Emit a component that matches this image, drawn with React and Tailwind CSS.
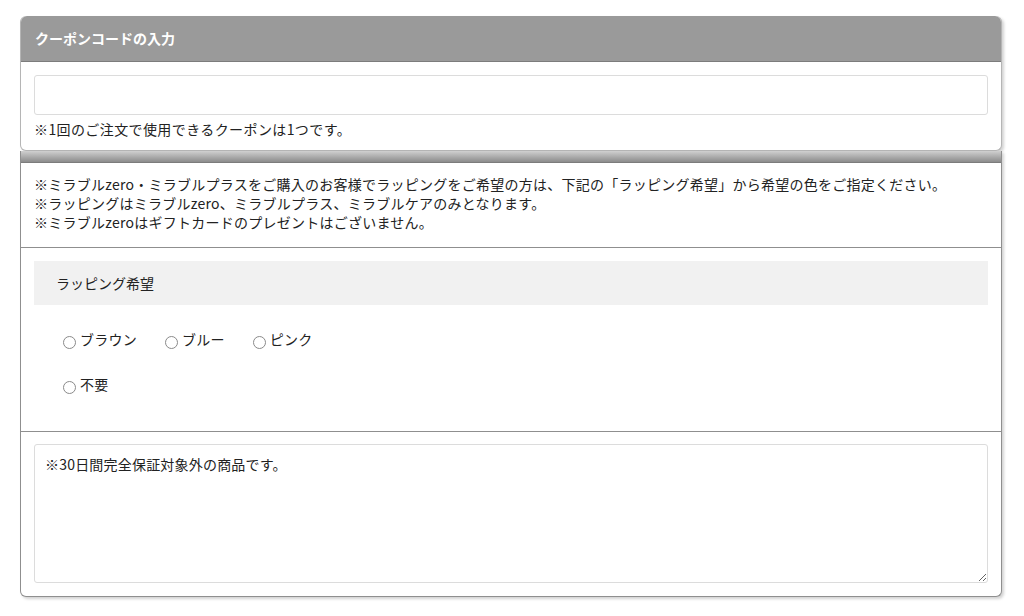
import React from "react";

const font = { fontFamily: '"Noto Sans CJK JP", "Noto Sans", sans-serif' };

function Radio({ label }) {
  return (
    <label className="flex items-center text-[14px] text-[#222] tracking-[0.25px]">
      <span className="mt-[5px] w-[13px] h-[13px] rounded-full border border-[#8a8a8a] bg-white" />
      <span className="ml-[4px]">{label}</span>
    </label>
  );
}

export default function App() {
  return (
    <div className="w-[1024px] h-[616px] bg-white px-[20px] pt-[16px]" style={font}>
      <div className="w-[982px] rounded-md border-x border-b border-[#b5b5b5] shadow-[2px_2px_3px_rgba(0,0,0,0.18)] bg-white">
        <div className="h-[46px] rounded-t-md bg-[#9a9a9a] border-b border-[#7c7c7c] flex items-center px-[14px] text-white text-[14px] font-bold">
          クーポンコードの入力
        </div>
        <div className="px-[13px] pt-[13px] pb-[11px]">
          <input className="block w-full h-[40px] border border-[#dcdcdc] rounded-[3px] outline-none" />
          <p className="mt-[4px] text-[14px] text-[#222] leading-[20px] tracking-[0.4px]">※1回のご注文で使用できるクーポンは1つです。</p>
        </div>
      </div>

      <div className="w-[982px] rounded-b-md border-x border-b border-[#8f8f8f] shadow-[2px_2px_3px_rgba(0,0,0,0.18)] bg-white">
        <div className="h-[12px] bg-gradient-to-b from-[#d0d0d0] to-[#8c8c8c] border-b border-[#7c7c7c]" />
        <div className="px-[13px] pt-[12px] pb-[15px] text-[14px] text-[#222] leading-[19px] tracking-[0.25px]">
          <p>※ミラブルzero・ミラブルプラスをご購入のお客様でラッピングをご希望の方は、下記の「ラッピング希望」から希望の色をご指定ください。</p>
          <p>※ラッピングはミラブルzero、ミラブルプラス、ミラブルケアのみとなります。</p>
          <p>※ミラブルzeroはギフトカードのプレゼントはございません。</p>
        </div>
        <div className="border-t border-[#8f8f8f] px-[13px] pt-[13px] pb-[36px]">
          <div className="h-[44px] bg-[#f1f1f1] flex items-center px-[22px] text-[14px] text-[#222]">ラッピング希望</div>
          <div className="pl-[29px] pt-[24px] flex flex-col gap-[24px]">
            <div className="flex gap-[28px]">
              <Radio label="ブラウン" />
              <Radio label="ブルー" />
              <Radio label="ピンク" />
            </div>
            <div className="flex">
              <Radio label="不要" />
            </div>
          </div>
        </div>
        <div className="border-t border-[#8f8f8f] px-[13px] pt-[12px] pb-[13px]">
          <textarea
            className="block w-full h-[139px] border border-[#dcdcdc] rounded-[3px] px-[10px] py-[10px] text-[14px] text-[#222] leading-[19px] tracking-[0.2px] outline-none"
            style={font}
            defaultValue="※30日間完全保証対象外の商品です。"
          />
        </div>
      </div>
    </div>
  );
}
